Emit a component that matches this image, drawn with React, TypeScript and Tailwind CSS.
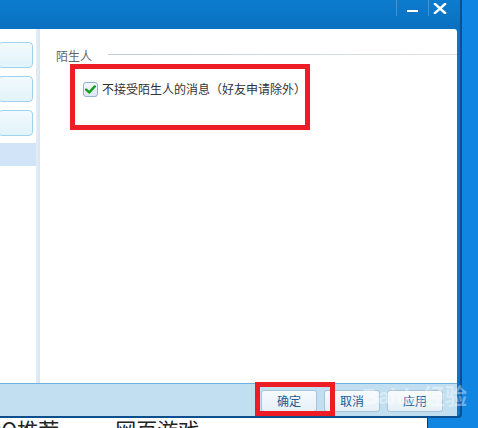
import React from 'react';

const cjk = { fontFamily: '"Noto Sans CJK SC", "Noto Sans", sans-serif' };

const SideButton: React.FC = () => (
  <div className="h-[26px] w-[35px] -ml-[2px] rounded-[4px] border border-[#9dd4ef] bg-gradient-to-b from-[#f2fafd] to-[#e2f3fa]" />
);

const FooterButton: React.FC<{ label: string }> = ({ label }) => (
  <button className="h-[22px] w-[56px] rounded-[3px] border border-[#a9c3d9] bg-gradient-to-b from-[#f6fafd] to-[#e6f0f8] text-[12px] text-[#1c5b96] leading-none">
    {label}
  </button>
);

export default function App() {
  return (
    <div className="relative w-[478px] h-[428px] overflow-hidden bg-[#1085e2]" style={cjk}>
      {/* Window */}
      <div className="flex flex-col w-[462px] h-[418px] bg-[#0b74c6] border-r-[2px] border-b-[2px] border-[#0d4f8c] rounded-br-[4px]">
        {/* Title bar */}
        <div className="relative h-[29px] flex justify-end pr-[10px] bg-gradient-to-b from-[#0c7ccf] to-[#0a6fbf]">
          <div className="flex h-[16px]">
            <div className="w-px bg-[#3d95d6]" />
            <div className="w-[31px] flex items-center justify-center">
              <div className="w-[11px] h-[2px] bg-white mt-[6px]" />
            </div>
            <div className="w-px bg-[#3d95d6]" />
            <div className="w-[21px] flex items-center justify-center">
              <svg width="14" height="11" viewBox="0 0 14 11">
                <path d="M2 1 L12 10 M12 1 L2 10" stroke="white" strokeWidth="2.4" strokeLinecap="square" />
              </svg>
            </div>
          </div>
        </div>

        {/* Body */}
        <div className="flex flex-1 mr-[3px] bg-white rounded-tr-[3px] overflow-hidden">
          {/* Sidebar */}
          <div className="w-[36px] flex flex-col pt-[13px] gap-[8px]">
            <SideButton />
            <SideButton />
            <SideButton />
            <div className="h-[23px] -mt-[1px] bg-[#d2e5f8]" />
          </div>
          <div className="w-[4px] bg-gradient-to-r from-[#e6eef6] to-[#d8e5f1]" />

          {/* Content */}
          <div className="flex-1 flex flex-col pl-[16px] pt-[19px]">
            <div className="flex items-center h-[16px]">
              <span className="text-[12px] text-[#666] leading-none">陌生人</span>
              <div className="flex-1 ml-[16px] -mt-[3px] h-px bg-gradient-to-r from-[#c3cad1] to-[#dfe3e7]" />
            </div>
            <div className="flex items-center ml-[27px] mt-[17px] h-[16px]">
              <div className="w-[15px] h-[15px] rounded-[3px] border border-[#8eb3d3] bg-gradient-to-b from-[#f4f8fc] to-[#dbe8f4] flex items-center justify-center">
                <svg width="11" height="9" viewBox="0 0 11 9">
                  <path d="M1.2 4.6 L4.2 7.4 L9.8 1.4" fill="none" stroke="#16a01e" strokeWidth="2.4" strokeLinecap="round" strokeLinejoin="round" />
                </svg>
              </div>
              <span className="ml-[4px] text-[12px] text-[#333] leading-none">不接受陌生人的消息（好友申请除外）</span>
            </div>
          </div>
        </div>

        {/* Footer bar */}
        <div className="h-[33px] mr-[3px] flex items-center justify-end gap-[7px] pr-[14px] pt-[1px] bg-[#c1dff1] border-t border-[#6eb1e0]">
          <FooterButton label="确定" />
          <FooterButton label="取消" />
          <FooterButton label="应用" />
        </div>
      </div>

      {/* Page below the window */}
      <div className="w-[428px] h-[10px] bg-white border-r border-[#333] overflow-hidden">
        <div className="flex gap-[56px] -mt-[4px] text-[21px] text-[#222] leading-[30px]">
          <span className="-ml-[14px]">QQ推荐</span>
          <span>网页游戏</span>
        </div>
      </div>

      {/* Annotations */}
      <div className="absolute left-[70px] top-[64px] w-[240px] h-[66px] border-[5px] border-[#ee1c25]" />
      <div className="absolute left-[255px] top-[382px] w-[80px] h-[34px] border-[5px] border-[#ee1c25]" />
      <div className="absolute left-[362px] top-[386px] text-[22px] font-bold text-white/40 leading-none pointer-events-none" style={{ fontFamily: '"Liberation Sans", "Noto Sans CJK SC", sans-serif' }}>
        Baidu经验
      </div>
    </div>
  );
}
